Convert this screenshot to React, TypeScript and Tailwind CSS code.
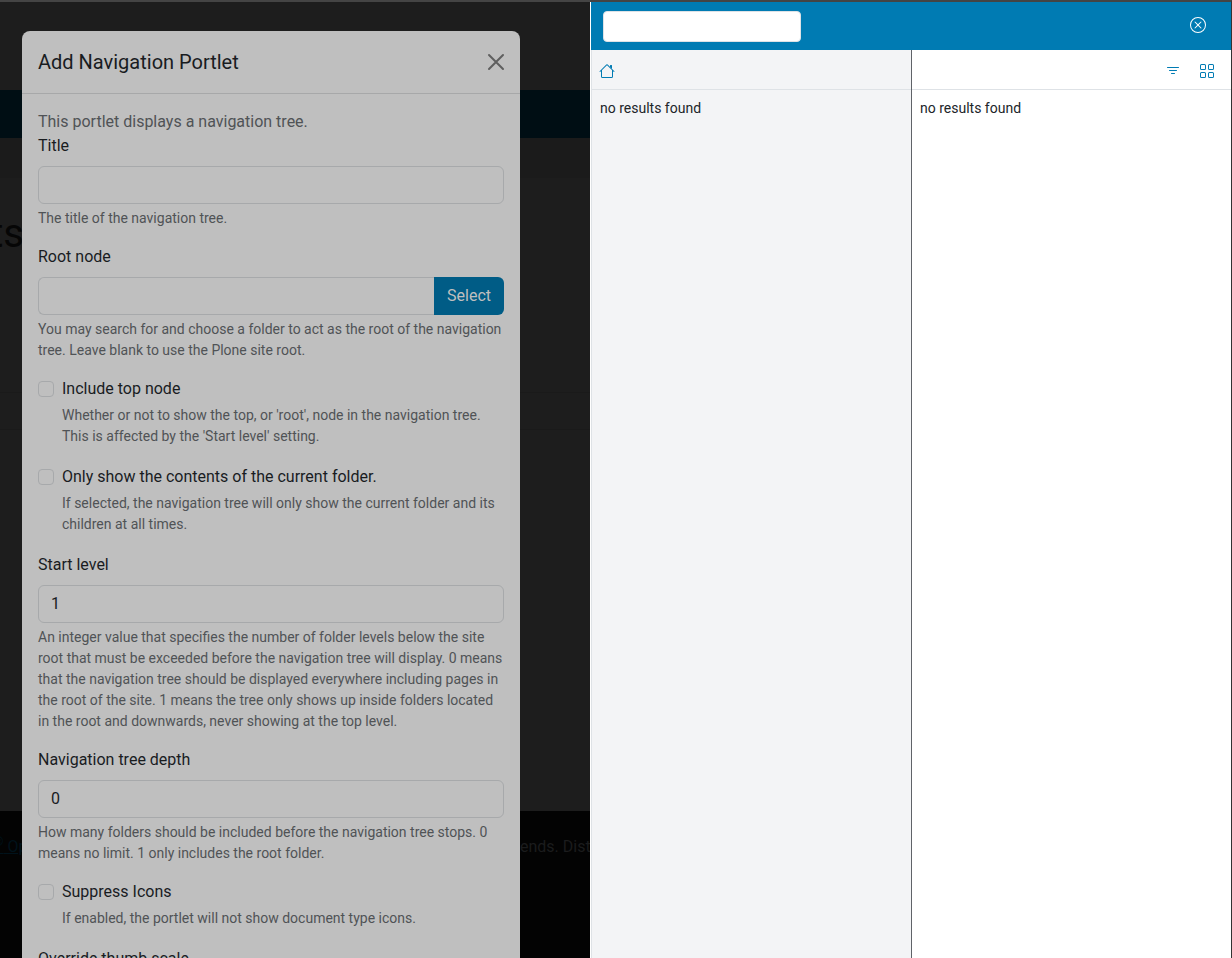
import type { ReactNode } from 'react'

const helpClass = 'mt-1 text-sm leading-[21px] text-[#505356]'
const inputClass =
  'block h-[38px] w-full min-w-0 rounded-md border border-[#a7a9ab] bg-[#bfbfbf] px-3 pb-0.5 text-base text-[#191c1f] outline-none'

function TextField({ id, label, help, value = '', action }: {
  id: string
  label: string
  help: string
  value?: string
  action?: ReactNode
}) {
  return (
    <div className="mb-4">
      <label htmlFor={id} className="mb-2 block">{label}</label>
      <div className="flex">
        <input id={id} type="text" defaultValue={value} className={action ? `${inputClass} rounded-r-none border-r-0` : inputClass} />
        {action}
      </div>
      <p className={helpClass}>{help}</p>
    </div>
  )
}

function CheckField({ id, label, help }: { id: string; label: string; help: string }) {
  return (
    <div className="mb-[18px] flex gap-2">
      <input
        id={id}
        type="checkbox"
        className="mt-1 size-4 shrink-0 appearance-none rounded border border-[#a7a9ab] bg-[#bfbfbf] checked:bg-[#005c86]"
      />
      <div>
        <label htmlFor={id} className="block">{label}</label>
        <p className={helpClass}>{help}</p>
      </div>
    </div>
  )
}

// Dimmed site behind the dialog
function SitePage() {
  return (
    <div className="flex h-full flex-col bg-[#1d1d1d]" aria-hidden="true">
      <div className="h-[88px] shrink-0" />
      <div className="h-12 shrink-0 bg-[#000e14]" />
      <div className="h-10 shrink-0 bg-[#1b1b1b]" />
      <div className="flex flex-1 flex-col">
        <div className="flex h-[214px] w-6 shrink-0 justify-end pt-8 text-[40px] leading-[48px] text-[#060606]">ts</div>
        <div className="h-[38px] shrink-0 border-y border-[#1a1a1a]" />
      </div>
      <footer className="flex h-[147px] shrink-0 whitespace-nowrap bg-[#030303] pt-6 leading-6 text-[#1b1c1d]">
        <div className="w-[520px]">
          <a href="#plone" className="-ml-1.5 text-[#00121b] underline"><sup className="text-xs">®</sup> Op</a>
        </div>
        <span>ends. Dist</span>
      </footer>
    </div>
  )
}

function PortletDialog() {
  return (
    <section
      role="dialog"
      aria-labelledby="dialog-title"
      className="absolute top-[29px] left-[22px] w-[498px] rounded-t-lg bg-[#bfbfbf] text-[#191c1f]"
    >
      <header className="flex items-center justify-between border-b border-[#a7a8a9] p-4">
        <h1 id="dialog-title" className="text-xl leading-[30px]">Add Navigation Portlet</h1>
        <button type="button" aria-label="Close" className="text-[#5f5f5f]">
          <svg viewBox="0 0 16 16" className="size-4" stroke="currentColor" strokeWidth="2" strokeLinecap="round" overflow="visible">
            <path d="M1 1l14 14M15 1L1 15" />
          </svg>
        </button>
      </header>
      <form className="p-4" onSubmit={(e) => e.preventDefault()}>
        <p className="text-[#505356]">This portlet displays a navigation tree.</p>
        <TextField id="title" label="Title" help="The title of the navigation tree." />
        <TextField
          id="root"
          label="Root node"
          help="You may search for and choose a folder to act as the root of the navigation tree. Leave blank to use the Plone site root."
          action={
            <button type="button" className="h-[38px] w-[70px] shrink-0 rounded-r-md bg-[#005c86] text-[#bfbfbf]">Select</button>
          }
        />
        <CheckField
          id="top-node"
          label="Include top node"
          help="Whether or not to show the top, or 'root', node in the navigation tree. This is affected by the 'Start level' setting."
        />
        <CheckField
          id="current-only"
          label="Only show the contents of the current folder."
          help="If selected, the navigation tree will only show the current folder and its children at all times."
        />
        <TextField
          id="start-level"
          label="Start level"
          value="1"
          help="An integer value that specifies the number of folder levels below the site root that must be exceeded before the navigation tree will display. 0 means that the navigation tree should be displayed everywhere including pages in the root of the site. 1 means the tree only shows up inside folders located in the root and downwards, never showing at the top level."
        />
        <TextField
          id="depth"
          label="Navigation tree depth"
          value="0"
          help="How many folders should be included before the navigation tree stops. 0 means no limit. 1 only includes the root folder."
        />
        <CheckField id="no-icons" label="Suppress Icons" help="If enabled, the portlet will not show document type icons." />
        <label htmlFor="thumb-scale" className="mb-2 block">Override thumb scale</label>
        <input id="thumb-scale" type="text" className={inputClass} />
      </form>
    </section>
  )
}

function ContentBrowser() {
  return (
    <aside className="absolute inset-y-0 right-0 flex w-[641px] max-w-full flex-col border-l border-white bg-white text-sm text-[#212529]">
      <div className="flex h-12 shrink-0 items-center justify-between bg-[#007bb3] pr-[25px] pl-3">
        <input type="search" aria-label="Search" className="h-[31px] w-[198px] rounded border border-[#dee2e6] bg-white px-2 outline-none" />
        <button type="button" aria-label="Close browser" className="pb-0.5 text-white">
          <svg viewBox="0 0 16 16" className="size-4" fill="currentColor">
            <path d="M8 15A7 7 0 1 1 8 1a7 7 0 0 1 0 14m0 1A8 8 0 1 0 8 0a8 8 0 0 0 0 16" />
            <path d="M4.646 4.646a.5.5 0 0 1 .708 0L8 7.293l2.646-2.647a.5.5 0 0 1 .708.708L8.707 8l2.647 2.646a.5.5 0 0 1-.708.708L8 8.707l-2.646 2.647a.5.5 0 0 1-.708-.708L7.293 8 4.646 5.354a.5.5 0 0 1 0-.708" />
          </svg>
        </button>
      </div>
      <div className="flex flex-1">
        <div className="w-[321px] shrink-0 border-x border-r-[#5f6368] border-l-[#dee2e6] bg-[#f3f4f6]">
          <div className="flex h-10 items-center border-b border-[#dee2e6] pt-0.5 pl-[7px]">
            <button type="button" aria-label="Home" className="text-[#007bb3]">
              <svg viewBox="0 0 16 16" className="size-4" fill="currentColor">
                <path fillRule="evenodd" d="M2 13.5V7h1v6.5a.5.5 0 0 0 .5.5h9a.5.5 0 0 0 .5-.5V7h1v6.5a1.5 1.5 0 0 1-1.5 1.5h-9A1.5 1.5 0 0 1 2 13.5m11-11V6l-2-2V2.500a.5.5 0 0 1 .5-.5h1a.5.5 0 0 1 .5.5" />
                <path fillRule="evenodd" d="M7.293 1.500a1 1 0 0 1 1.414 0l6.647 6.646a.5.5 0 0 1-.708.708L8 2.207 1.354 8.854a.5.5 0 1 1-.708-.708z" />
              </svg>
            </button>
          </div>
          <p className="p-2 leading-[21px]">no results found</p>
        </div>
        <div className="flex-1">
          <div className="flex h-10 items-center justify-end gap-[18px] border-b border-[#dee2e6] pt-0.5 pr-4 text-[#007bb3]">
            <button type="button" aria-label="Filter">
              <svg viewBox="0 0 16 16" className="size-4" fill="none" stroke="currentColor" strokeLinecap="round">
                <path d="M2.500 4.500h11M4.500 7.500h7M6.500 10.500h3" />
              </svg>
            </button>
            <button type="button" aria-label="Grid view">
              <svg viewBox="0 0 16 16" className="size-4" fill="currentColor">
                <path d="M1 2.500A1.500 1.500 0 0 1 2.500 1h3A1.500 1.500 0 0 1 7 2.500v3A1.500 1.500 0 0 1 5.500 7h-3A1.500 1.500 0 0 1 1 5.500zM2.500 2a.5.5 0 0 0-.5.5v3a.5.5 0 0 0 .5.5h3a.5.5 0 0 0 .5-.5v-3a.5.5 0 0 0-.5-.5zm6.500.5A1.500 1.500 0 0 1 10.500 1h3A1.500 1.500 0 0 1 15 2.500v3A1.500 1.500 0 0 1 13.500 7h-3A1.500 1.500 0 0 1 9 5.500zm1.500-.5a.5.5 0 0 0-.5.5v3a.5.5 0 0 0 .5.5h3a.5.5 0 0 0 .5-.5v-3a.5.5 0 0 0-.5-.5zM1 10.500A1.500 1.500 0 0 1 2.500 9h3A1.500 1.500 0 0 1 7 10.500v3A1.500 1.500 0 0 1 5.500 15h-3A1.500 1.500 0 0 1 1 13.500zm1.500-.5a.5.5 0 0 0-.5.5v3a.5.5 0 0 0 .5.5h3a.5.5 0 0 0 .5-.5v-3a.5.5 0 0 0-.5-.5zm6.500.5A1.500 1.500 0 0 1 10.500 9h3a1.500 1.500 0 0 1 1.500 1.500v3a1.500 1.500 0 0 1-1.500 1.500h-3A1.500 1.500 0 0 1 9 13.500zm1.500-.5a.5.5 0 0 0-.5.5v3a.5.5 0 0 0 .5.5h3a.5.5 0 0 0 .5-.5v-3a.5.5 0 0 0-.5-.5z" />
              </svg>
            </button>
          </div>
          <p className="p-2 leading-[21px]">no results found</p>
        </div>
      </div>
    </aside>
  )
}

export default function App() {
  return (
    <div className="h-screen border-t-2 border-r border-t-[#444444] border-r-[#333333] font-[Roboto,sans-serif] text-base leading-6">
      <main className="relative h-full overflow-hidden">
        <SitePage />
        <PortletDialog />
        <ContentBrowser />
      </main>
    </div>
  )
}
